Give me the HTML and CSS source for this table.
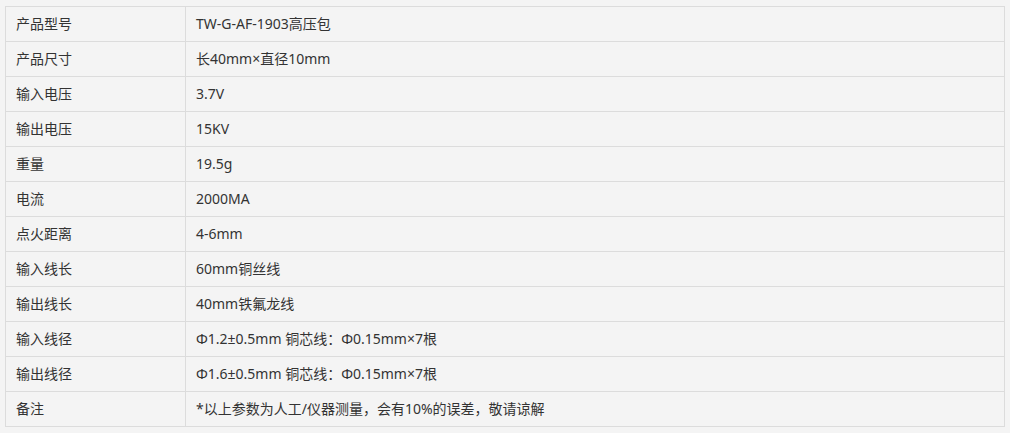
FILE: index.html
```html
<!DOCTYPE html>
<html lang="zh-CN">
<head>
  <meta charset="UTF-8">
  <title>产品参数</title>
  <link rel="stylesheet" href="styles.css">
</head>
<body>
  <table class="spec">
    <tbody>
      <tr><td class="key">产品型号</td><td>TW-G-AF-1903高压包</td></tr>
      <tr><td class="key">产品尺寸</td><td>长40mm×直径10mm</td></tr>
      <tr><td class="key">输入电压</td><td>3.7V</td></tr>
      <tr><td class="key">输出电压</td><td>15KV</td></tr>
      <tr><td class="key">重量</td><td>19.5g</td></tr>
      <tr><td class="key">电流</td><td>2000MA</td></tr>
      <tr><td class="key">点火距离</td><td>4-6mm</td></tr>
      <tr><td class="key">输入线长</td><td>60mm铜丝线</td></tr>
      <tr><td class="key">输出线长</td><td>40mm铁氟龙线</td></tr>
      <tr><td class="key">输入线径</td><td>Φ1.2±0.5mm 铜芯线：Φ0.15mm×7根</td></tr>
      <tr><td class="key">输出线径</td><td>Φ1.6±0.5mm 铜芯线：Φ0.15mm×7根</td></tr>
      <tr><td class="key">备注</td><td>*以上参数为人工/仪器测量，会有10%的误差，敬请谅解</td></tr>
    </tbody>
  </table>
</body>
</html>
```

FILE: styles.css
```css
body { margin: 0; padding: 6px 5px; background: #f4f4f4; font-family: "Noto Sans", "Noto Sans CJK SC", sans-serif; font-size: 14px; color: #333; }
.spec { width: 1000px; border-collapse: collapse; background: #f4f4f4; }
.spec td { border: 1px solid #dcdcdc; height: 34px; padding: 0 10px; text-align: left; vertical-align: middle; line-height: 20px; }
.spec td.key { width: 159px; }
```
